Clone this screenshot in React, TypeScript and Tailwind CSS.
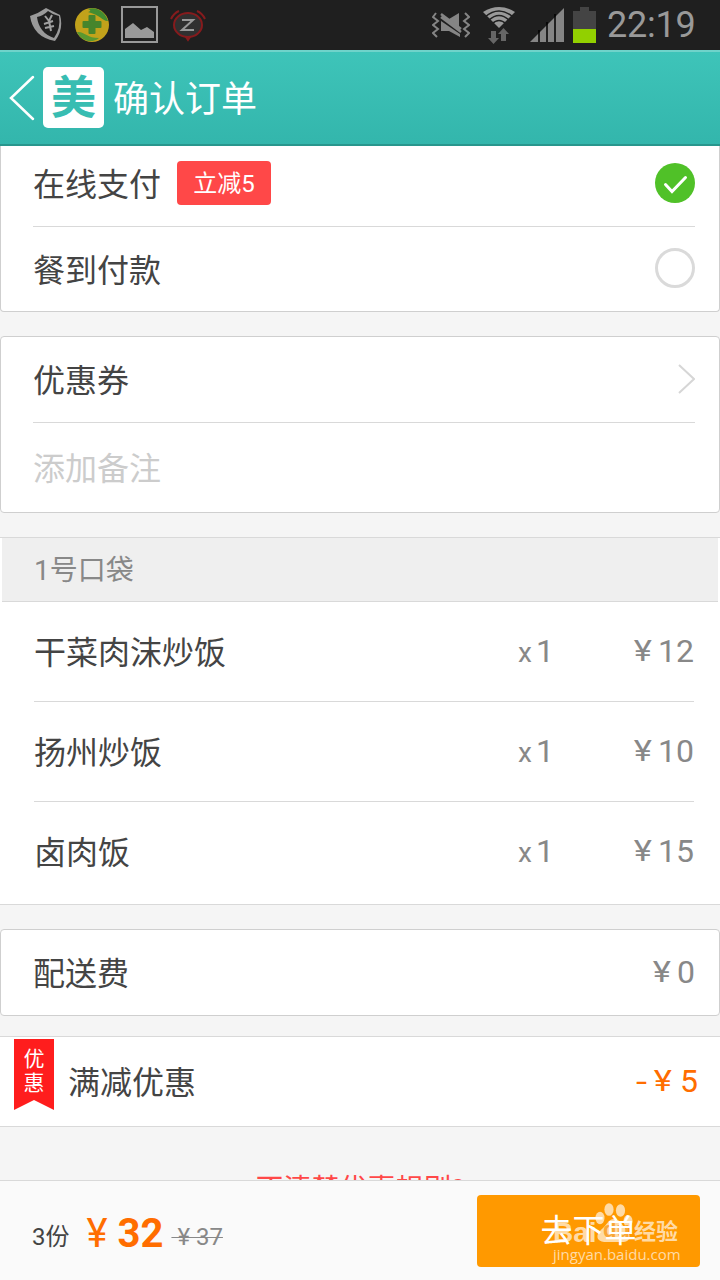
import React, { useState } from 'react';

const dishes = [
  { name: '干菜肉沫炒饭', count: 1, price: 12 },
  { name: '扬州炒饭', count: 1, price: 10 },
  { name: '卤肉饭', count: 1, price: 15 },
];

const App = () => {
  const [payment, setPayment] = useState('online');

  return (
    <div className="flex h-[1280px] w-[720px] flex-col overflow-hidden bg-[#f5f5f5] font-['Roboto','Noto_Sans_CJK_SC',sans-serif] text-[32px] leading-none text-[#444444]">
      <StatusBar />
      <Header />
      <main className="flex min-h-0 flex-1 flex-col overflow-hidden">
        <section className="h-[166px] shrink-0 rounded-b border border-t-0 border-[#cfcfcf] bg-white pr-6 pl-8">
          <div
            className="flex h-[81px] items-center border-b border-[#d9d9d9] pb-1.5"
            onClick={() => setPayment('online')}
          >
            <span className="pt-1">在线支付</span>
            <span className="ml-4 flex h-11 w-[94px] items-center justify-center rounded bg-[#ff4848] pt-0.5 text-2xl leading-none text-white">
              立减5
            </span>
            <Radio checked={payment === 'online'} />
          </div>
          <div
            className="flex h-[84px] items-center pb-[3px]"
            onClick={() => setPayment('cash')}
          >
            <span className="pt-1.5">餐到付款</span>
            <Radio checked={payment === 'cash'} />
          </div>
        </section>

        <section className="mt-6 h-[177px] shrink-0 rounded border border-[#cfcfcf] bg-white pr-6 pl-8">
          <div className="flex h-[86px] items-center justify-between border-b border-[#d9d9d9] pb-0.5">
            <span className="pt-1">优惠券</span>
            <svg width="18" height="32" viewBox="0 0 18 32" fill="none">
              <path d="M2 2l15 14L2 30" stroke="#d6d6d6" strokeWidth="2" />
            </svg>
          </div>
          <div className="flex h-[89px] items-center pt-0.5 text-[#cccccc]">
            添加备注
          </div>
        </section>

        <section className="mt-6 h-[368px] shrink-0 border-y border-[#d9d9d9] bg-white">
          <div className="mx-0.5 flex h-16 items-center border-b border-[#d9d9d9] bg-[#efefef] pt-[3px] pl-8 text-[28px] leading-none text-[#888888]">
            1号口袋
          </div>
          <div className="mr-[26px] ml-[34px]">
            {dishes.map((dish) => (
              <DishRow key={dish.name} {...dish} />
            ))}
          </div>
        </section>

        <section className="mt-6 flex h-[87px] shrink-0 items-center justify-between rounded border border-[#cfcfcf] bg-white pr-6 pl-8">
          <span className="pt-[3px]">配送费</span>
          <Price value={0} />
        </section>

        <section className="mt-5 flex h-[91px] shrink-0 border-y border-[#d9d9d9] bg-white pr-[22px] pl-3.5">
          <div className="mt-0.5 flex h-[71px] w-10 flex-col items-center bg-[#ff1d1d] pt-2 text-[21px] leading-6 text-white [clip-path:polygon(0_0,100%_0,100%_100%,50%_86%,0_100%)]">
            <span>优</span>
            <span>惠</span>
          </div>
          <span className="ml-3.5 self-center pt-0.5">满减优惠</span>
          <span className="ml-auto flex items-center pb-0.5 text-[#ff6d00]">
            <span className="mr-2 origin-left scale-x-125">-</span>
            <Yen className="mr-[7px] h-[23px] w-5" />5
          </span>
        </section>

        <p className="mt-[49px] shrink-0 text-center text-[28px] leading-none text-[#ff4848]">
          不清楚优惠规则?
        </p>
      </main>
      <Footer />
    </div>
  );
};

// Full-width style yen sign, wider than the Latin one
const Yen = ({ className }: any) => {
  return (
    <span className={`inline-flex items-center justify-center ${className}`}>
      <span className="inline-block scale-x-115 text-[30px]">¥</span>
    </span>
  );
};

const Header = () => {
  return (
    <header className="flex h-24 shrink-0 items-center border-t-2 border-b-2 border-t-[#6fd3ca] border-b-[#28968d] bg-linear-to-b from-[#3ec4b9] to-[#33b6ac] pb-px pl-2 text-white">
      <svg width="30" height="48" viewBox="0 0 30 48" fill="none">
        <path
          d="M25 3L3 24l22 21"
          stroke="currentColor"
          strokeWidth="2.5"
          strokeLinecap="round"
        />
      </svg>
      <div className="ml-[5px] flex h-[61px] w-[61px] items-center justify-center rounded-[5px] bg-white pt-0.5 text-[45px] leading-none font-bold text-[#38bdb2]">
        美
      </div>
      <h1 className="ml-[9px] pt-[5px] text-4xl leading-none">确认订单</h1>
    </header>
  );
};

const DishRow = ({ name, count, price }: any) => {
  return (
    <div className="flex h-[100px] items-center border-b border-[#d9d9d9] last:border-b-0">
      <span className="pt-0.5">{name}</span>
      <span className="ml-auto w-[34px] pb-0.5 text-[#888888]">
        <span className="mr-1 text-[28px]">x</span>
        {count}
      </span>
      <span className="flex w-[142px] justify-end">
        <Price value={price} />
      </span>
    </div>
  );
};

const Price = ({ value }: any) => {
  return (
    <span className="flex items-center pb-0.5 text-[#888888]">
      <Yen className="mr-[5px] h-[23px] w-5" />
      {value}
    </span>
  );
};

const Radio = ({ checked }: any) => {
  return (
    <svg className="ml-auto" width="40" height="40" viewBox="0 0 40 40">
      {checked ? (
        <>
          <circle cx="20" cy="20" r="20" fill="#50c128" />
          <path
            d="M10.5 21.5l6.5 7L30.5 14.5"
            fill="none"
            stroke="#fff"
            strokeWidth="3"
            strokeLinecap="round"
          />
        </>
      ) : (
        <circle
          cx="20"
          cy="20"
          r="18.5"
          fill="#fff"
          stroke="#dadada"
          strokeWidth="3"
        />
      )}
    </svg>
  );
};

const Footer = () => {
  return (
    <footer className="flex h-[100px] shrink-0 items-center border-t border-[#d9d9d9] bg-[#fafafa] pr-5 pl-8">
      <div className="flex items-center pt-1.5 leading-none">
        <span className="pt-1.5 text-2xl leading-none">3份</span>
        <span className="ml-[17px] inline-block text-[40px] leading-none text-[#ff6d00]">
          ¥
        </span>
        <span className="ml-2.5 text-[40px] leading-none font-bold text-[#ff6d00]">
          32
        </span>
        <span className="ml-2 pt-1.5 text-2xl leading-none text-[#888888] line-through decoration-1">
          &nbsp;¥&nbsp;37
        </span>
      </div>
      <button
        type="button"
        className="relative ml-auto h-[72px] w-[223px] rounded bg-[#ff9900] leading-none text-white"
      >
        <Watermark />
        <span className="relative">去下单</span>
      </button>
    </footer>
  );
};

const Watermark = () => {
  return (
    <span className="absolute top-2 left-[76px] h-[62px] w-[130px] text-left text-[#ffdba6]">
      <svg
        className="absolute top-0 left-[42px]"
        width="40"
        height="44"
        viewBox="0 0 40 44"
      >
        <ellipse cx="5" cy="15" rx="4.5" ry="6.2" fill="currentColor" />
        <ellipse cx="14" cy="6.5" rx="4.6" ry="6.3" fill="currentColor" />
        <ellipse cx="25.5" cy="7.5" rx="4.6" ry="6.2" fill="currentColor" />
        <ellipse cx="33" cy="18" rx="4.5" ry="6" fill="currentColor" />
        <path
          d="M19 16c5 0 7 4 10 8s7 7 5 12c-2 4-7 3-15 3s-13 1-16-3c-2-5 2-8 6-12s5-8 10-8z"
          fill="currentColor"
        />
      </svg>
      <span className="absolute top-[16px] left-0 font-['Liberation_Sans',sans-serif] text-[28px] leading-none font-bold">
        Bai
      </span>
      <span className="absolute top-[16px] left-[50px] font-['Liberation_Sans',sans-serif] text-[22px] leading-none font-bold text-[#f9a636]">
        du
      </span>
      <span className="absolute top-[18px] left-[81px] text-[22px] leading-none font-bold whitespace-nowrap">
        经验
      </span>
      <span className="absolute top-[41px] left-0 font-['Open_Sans',sans-serif] text-[15px] leading-5 font-medium">
        jingyan.baidu.com
      </span>
    </span>
  );
};

const StatusBar = () => {
  return (
    <div className="flex h-[50px] shrink-0 items-center bg-[#1f1f1f] pr-6 pl-[30px] text-[#999999]">
      <svg width="32" height="36" viewBox="0 0 32 36" fill="none">
        <path
          d="M0 9Q9 6 16 1Q24 5 30 8Q34 22 25 34Q3 30 0 9z"
          fill="#9a9a9a"
        />
        <path
          d="M7 10Q13 9 18 4Q23 8 29 9Q31 21 24 31Q9 26 7 10z"
          fill="#1f1f1f"
        />
        <path
          d="M15 9l4 5 3-6M19 14l2 10M14 17l9-3M15 21l9-2"
          stroke="#a0a0a0"
          strokeWidth="2"
        />
      </svg>
      <svg className="ml-[13px]" width="35" height="36" viewBox="0 0 35 36">
        <circle cx="17" cy="18" r="17" fill="#c2a21b" />
        <path d="M13 2c9-3 18 4 20 12-4 1-8-6-20-9 3-1 3-2 0-3z" fill="#438c30" />
        <path d="M2 25c7-1 10 6 22 6-7 6-18 3-22-6z" fill="#5a9830" />
        <path
          d="M14.5 9h5v6h6v5h-6v6h-5v-6h-6v-5h6z"
          fill="#46852c"
          stroke="#46852c"
          strokeWidth="2"
          strokeLinejoin="round"
        />
      </svg>
      <svg className="ml-[11px]" width="38" height="38" viewBox="0 0 38 38">
        <rect
          x="1"
          y="1"
          width="35"
          height="35"
          fill="none"
          stroke="#999"
          strokeWidth="2"
        />
        <path d="M4 32v-9l8-6 8 7 6-3 7 5v6z" fill="#999" />
      </svg>
      <svg
        className="ml-[11px]"
        width="36"
        height="36"
        viewBox="0 0 36 36"
        fill="none"
        stroke="#851b1d"
        strokeWidth="2"
      >
        <ellipse cx="18" cy="18" rx="14" ry="12" fill="#303030" />
        <path d="M1 12Q4 6 9 4M27 4Q32 6 35 12" />
        <path d="M16 30l2 3 2-3z" fill="#851b1d" />
        <path d="M12 13h11L12 23h12" stroke="#999" />
      </svg>

      <svg className="ml-auto" width="38" height="30" viewBox="0 0 38 30">
        <path
          d="M4 3L1 7l5 4-5 4 5 4-5 4 4 4M33 3l4 4-5 4 5 4-5 4 5 4-4 4"
          fill="none"
          stroke="#858585"
          strokeWidth="2"
        />
        <path d="M9 11L28 24v3L17 21H9zM17 9L27 3v15z" fill="#858585" />
        <path d="M9 4l20 15M9 7l20 15" stroke="#858585" strokeWidth="2.5" />
      </svg>
      <svg className="ml-3" width="34" height="38" viewBox="0 0 34 38">
        <path d="M1 6Q17-4 33 6L17 22z" fill="#999" />
        <path
          d="M3 11Q17-1 31 11M7 14Q17 5 27 14M10 18Q17 11 24 18"
          fill="none"
          stroke="#1f1f1f"
          strokeWidth="1.5"
        />
        <path
          d="M9 25h5v7h3l-5.500 6L6 32h3zM19 35v-7h-3l5.500-6 5.500 6h-3v7z"
          fill="#666"
        />
      </svg>
      <svg className="ml-3.5" width="34" height="34" viewBox="0 0 34 34">
        <path d="M0 34L34 0v34z" fill="#858585" />
        <path
          d="M9 22v12M17 14v20M25 6v28"
          stroke="#000"
          strokeWidth="1.5"
        />
      </svg>
      <svg className="ml-[9px]" width="23" height="36" viewBox="0 0 23 36">
        <path d="M7 0h9v4h7v18H0V4h7z" fill="#444" />
        <path d="M0 22h23v14H0z" fill="#92d000" />
      </svg>
      <span className="ml-[11px] w-[89px] text-4xl leading-none tracking-[-0.2px]">
        22:19
      </span>
    </div>
  );
};

export default App;
